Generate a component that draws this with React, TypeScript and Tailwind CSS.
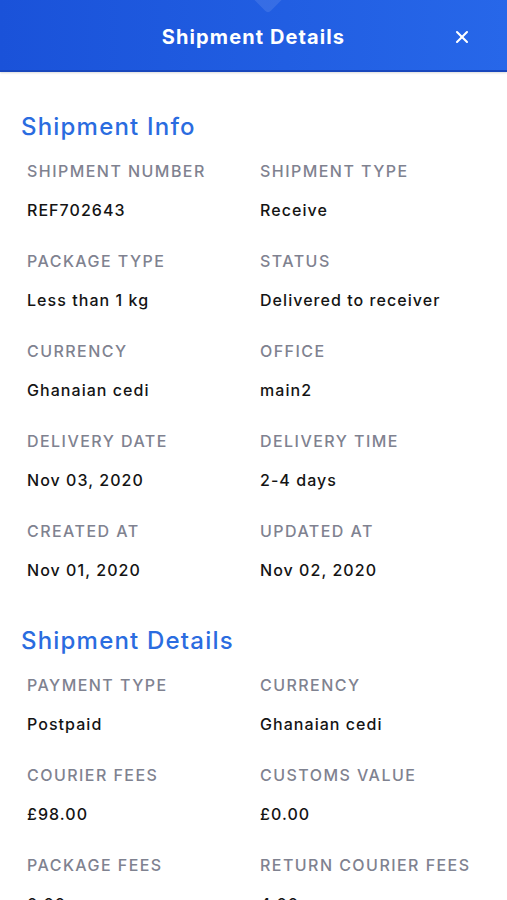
import React from "react";
import { X } from "lucide-react";

type Field = { label: string; value: string };

const INFO: Field[] = [
  { label: "Shipment Number", value: "REF702643" },
  { label: "Shipment Type", value: "Receive" },
  { label: "Package Type", value: "Less than 1 kg" },
  { label: "Status", value: "Delivered to receiver" },
  { label: "Currency", value: "Ghanaian cedi" },
  { label: "Office", value: "main2" },
  { label: "Delivery Date", value: "Nov 03, 2020" },
  { label: "Delivery Time", value: "2-4 days" },
  { label: "Created At", value: "Nov 01, 2020" },
  { label: "Updated At", value: "Nov 02, 2020" },
];

const DETAILS: Field[] = [
  { label: "Payment Type", value: "Postpaid" },
  { label: "Currency", value: "Ghanaian cedi" },
  { label: "Courier Fees", value: "£98.00" },
  { label: "Customs Value", value: "£0.00" },
  { label: "Package Fees", value: "0.00" },
  { label: "Return Courier Fees", value: "4.00" },
];

function Section({ title, fields }: { title: string; fields: Field[] }) {
  return (
    <section>
      <h2 className="pl-[21px] text-[24px] leading-[32px] font-medium text-[#2a6ce0] tracking-[1.2px]">
        {title}
      </h2>
      <div className="mt-[18px] grid grid-cols-[233px_1fr] gap-y-[31px] pl-[27px]">
        {fields.map((f) => (
          <div key={f.label} className="flex flex-col">
            <span className="text-[16px] leading-[20px] font-medium uppercase text-[#7f8290] tracking-[1.45px]">
              {f.label}
            </span>
            <span className="mt-[19px] text-[16px] leading-[20px] font-medium text-[#141414] tracking-[1.05px]">
              {f.value}
            </span>
          </div>
        ))}
      </div>
    </section>
  );
}

export default function App() {
  return (
    <div className="w-[507px] h-[900px] overflow-hidden bg-white font-['Inter',sans-serif]">
      {/* Header */}
      <header className="relative h-[72px] bg-linear-to-r from-[#1a52d9] to-[#2767e9] border-b-2 border-[#1847bd] flex items-center justify-center shadow-[0_1px_2px_rgba(0,0,0,0.15)]">
        <div className="absolute left-[257px] top-[-13px] w-[22px] h-[22px] rotate-45 rounded-[4px] bg-white/10" />
        <h1 className="mt-[3px] text-[20px] font-bold text-white tracking-[1.1px]">Shipment Details</h1>
        <button className="absolute right-[35px] top-[27px] text-white">
          <X className="w-[20px] h-[20px]" strokeWidth={2.5} />
        </button>
      </header>

      <div className="pt-[39px] flex flex-col gap-[45px]">
        <Section title="Shipment Info" fields={INFO} />
        <Section title="Shipment Details" fields={DETAILS} />
      </div>
    </div>
  );
}
